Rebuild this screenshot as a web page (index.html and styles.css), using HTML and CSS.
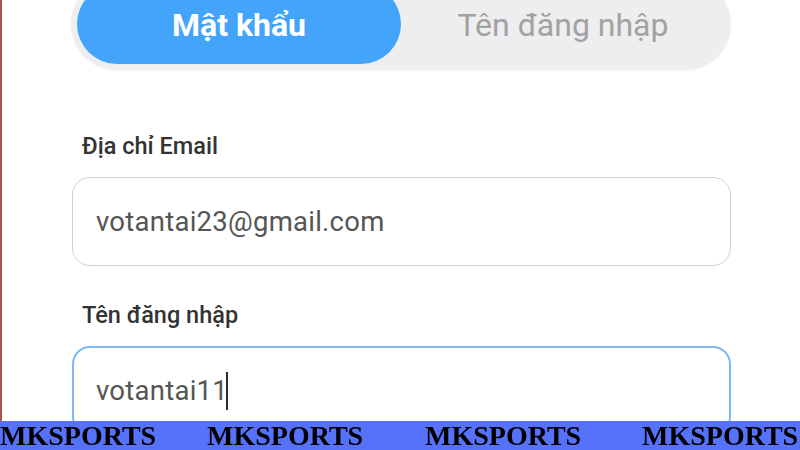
FILE: index.html
```html
<!DOCTYPE html>
<html lang="vi">
<head>
<meta charset="utf-8">
<title>Đăng ký</title>
<link rel="stylesheet" href="styles.css">
</head>
<body>
<div class="page">
  <main class="form">
    <div class="tabs">
      <div class="tab tab-active">Mật khẩu</div>
      <div class="tab">Tên đăng nhập</div>
    </div>
    <div class="field field-first">
      <div class="label">Địa chỉ Email</div>
      <div class="input">votantai23@gmail.com</div>
    </div>
    <div class="field">
      <div class="label">Tên đăng nhập</div>
      <div class="input input-focus">votantai11<span class="caret"></span></div>
    </div>
  </main>
</div>
<div class="banner">
  <span class="brand b1">MKSPORTS</span>
  <span class="brand b2">MKSPORTS</span>
  <span class="brand b3">MKSPORTS</span>
  <span class="brand b4">MKSPORTS</span>
</div>
</body>
</html>
```
FILE: styles.css
```css
html, body {
  margin: 0;
  padding: 0;
  background: #ffffff;
}
body {
  width: 800px;
  height: 450px;
  overflow: hidden;
  font-family: Roboto, "Noto Sans", Arial, sans-serif;
}
.page {
  height: 450px;
  border-left: 2px solid #a8574f;
  padding-left: 70px;
  box-sizing: border-box;
}
.form {
  width: 659px;
  display: flex;
  flex-direction: column;
}
.tabs {
  margin-top: -22px;
  margin-left: -1px;
  width: 660px;
  box-sizing: border-box;
  padding: 6px;
  background: #eeeef0;
  border-radius: 46px;
  display: grid;
  grid-template-columns: 1fr 1fr;
  box-shadow: 0 1px 2px rgba(0,0,0,0.04);
}
.tab {
  height: 80px;
  border-radius: 40px;
  display: flex;
  align-items: center;
  justify-content: center;
  font-size: 32px;
  color: #a2a2a2;
  padding-top: 2px;
  box-sizing: border-box;
}
.tab-active {
  background: #43a4fa;
  color: #ffffff;
  font-weight: 700;
}
.field {
  display: flex;
  flex-direction: column;
  margin-top: 35px;
}
.field-first {
  margin-top: 62px;
}
.label {
  font-size: 23.5px;
  line-height: 28px;
  font-weight: 500;
  color: #333333;
  padding-left: 10px;
  margin-bottom: 17px;
}
.input {
  height: 89px;
  box-sizing: border-box;
  border: 1.5px solid #d2d2d2;
  border-radius: 18px;
  padding-left: 23px;
  display: flex;
  align-items: center;
  font-size: 27.5px;
  letter-spacing: 0.25px;
  color: #555555;
}
.input-focus {
  border: 2px solid #80b9ee;
  padding-left: 22px;
}
.caret {
  display: inline-block;
  width: 2px;
  height: 38px;
  background: #2a2a2a;
  margin-left: -2px;
}
.banner {
  position: fixed;
  left: 0;
  bottom: 0;
  width: 800px;
  height: 29px;
  background: #5672fb;
  display: grid;
  grid-template-columns: 207px 218px 217px auto;
  align-items: center;
}
.brand {
  font-family: "Liberation Serif", "Times New Roman", serif;
  font-weight: 700;
  font-size: 28px;
  line-height: 29px;
  color: #000000;
  white-space: nowrap;
}
```
